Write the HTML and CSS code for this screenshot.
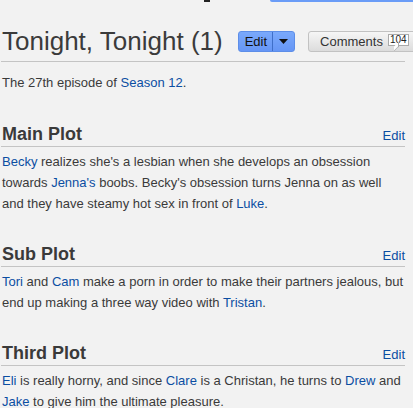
FILE: index.html
```html
<!DOCTYPE html>
<html>
<head>
<meta charset="utf-8">
<link rel="stylesheet" href="styles.css">
</head>
<body>
<div class="topbits"><span class="cursor"></span><span class="bluebar"></span></div>
<div class="page">
  <div class="header">
    <h1 class="title">Tonight, Tonight (1)</h1>
    <div class="editbtn"><span class="editlabel">Edit</span><span class="editdrop"><svg width="9" height="5" viewBox="0 0 9 5"><path d="M0 0H9L4.5 5Z" fill="#111"/></svg></span></div>
    <div class="commentsbtn"><span class="clabel">Comments</span><span class="bubble">104</span></div>
  </div>
  <p class="intro">The 27th episode of <a href="#">Season 12</a>.</p>

  <div class="section">
    <div class="sechead"><h2>Main Plot</h2><a href="#" class="secedit">Edit</a></div>
    <p><a href="#">Becky</a> realizes she's a lesbian when she develops an obsession towards <a href="#">Jenna's</a> boobs. Becky's obsession turns Jenna on as well and they have steamy hot sex in front of <a href="#">Luke</a>.</p>
  </div>

  <div class="section">
    <div class="sechead"><h2>Sub Plot</h2><a href="#" class="secedit">Edit</a></div>
    <p><a href="#">Tori</a> and <a href="#">Cam</a> make a porn in order to make their partners jealous, but end up making a three way video with <a href="#">Tristan</a>.</p>
  </div>

  <div class="section">
    <div class="sechead"><h2>Third Plot</h2><a href="#" class="secedit">Edit</a></div>
    <p><a href="#">Eli</a> is really horny, and since <a href="#">Clare</a> is a Christan, he turns to <a href="#">Drew</a> and <a href="#">Jake</a> to give him the ultimate pleasure.</p>
  </div>
</div>
</body>
</html>
```
FILE: styles.css
```css
html, body {
  margin: 0;
  padding: 0;
  background: #f2f2f2;
  overflow: hidden;
}
body {
  font-family: "Liberation Sans", Arial, sans-serif;
  color: #3a3a3a;
  position: relative;
  width: 413px;
  height: 408px;
}
a { color: #0b4ea2; text-decoration: none; }
.topbits { position: absolute; top: 0; left: 0; width: 413px; height: 3px; }
.cursor { position: absolute; left: 204px; top: 0; width: 6px; height: 2px; background: #222; }
.bluebar { position: absolute; left: 270px; top: 0; width: 143px; height: 2px; background: #6a9cf7; border-radius: 0 0 0 2px; }
.page {
  padding: 26px 8px 0 1px;
}
.header {
  display: flex;
  align-items: center;
  border-bottom: 1px solid #c4c4c4;
  padding-bottom: 5px;
  white-space: nowrap;
}
.title {
  margin: 0 0 0 1px;
  font-weight: normal;
  font-size: 26px;
  line-height: 30px;
  color: #3b3b3b;
}
.editbtn {
  display: flex;
  flex: none;
  margin-left: 15px;
  height: 19px;
  border: 1px solid #5d8ee8;
  border-radius: 3px;
  background: linear-gradient(#7aa9fb, #6696f5);
  font-size: 13px;
  color: #111;
}
.editlabel { padding: 0 5px 0 6px; line-height: 19px; border-right: 1px solid #3f6fc8; }
.editdrop { width: 21px; display: flex; align-items: center; justify-content: center; }
.commentsbtn {
  display: flex;
  align-items: flex-start;
  margin-left: 13px;
  height: 19px;
  width: 120px;
  flex: none;
  padding-left: 11px;
  border: 1px solid #c2c2c2;
  border-radius: 3px;
  background: linear-gradient(#f6f6f6, #dcdcdc);
  font-size: 13px;
  color: #333;
}
.clabel { line-height: 19px; }
.bubble {
  position: relative;
  margin-left: 5px;
  margin-top: 2px;
  background: #fff;
  border: 1px solid #aaa;
  font-size: 10px;
  line-height: 10px;
  padding: 0 1px;
  color: #222;
}
.bubble::after {
  content: "";
  position: absolute;
  left: 5px;
  bottom: -4px;
  width: 4px;
  height: 4px;
  background: #fff;
  border-right: 1px solid #aaa;
  border-bottom: 1px solid #aaa;
  transform: skewY(-45deg);
}
p {
  margin: 0;
  font-size: 13px;
  line-height: 21px;
}
.intro { margin-top: 10px; padding-left: 1px; }
.section { margin-top: 30px; }
.section + .section { margin-top: 29px; }
.sechead {
  display: flex;
  justify-content: space-between;
  align-items: flex-end;
  border-bottom: 1px solid #c4c4c4;
  padding-bottom: 1px;
  margin-bottom: 4px;
}
h2 {
  margin: 0 0 0 1px;
  font-size: 18px;
  line-height: 22px;
  font-weight: bold;
  color: #3a3a3a;
}
.secedit { font-size: 13px; line-height: 18px; }
.section p { padding-left: 1px; }
```
